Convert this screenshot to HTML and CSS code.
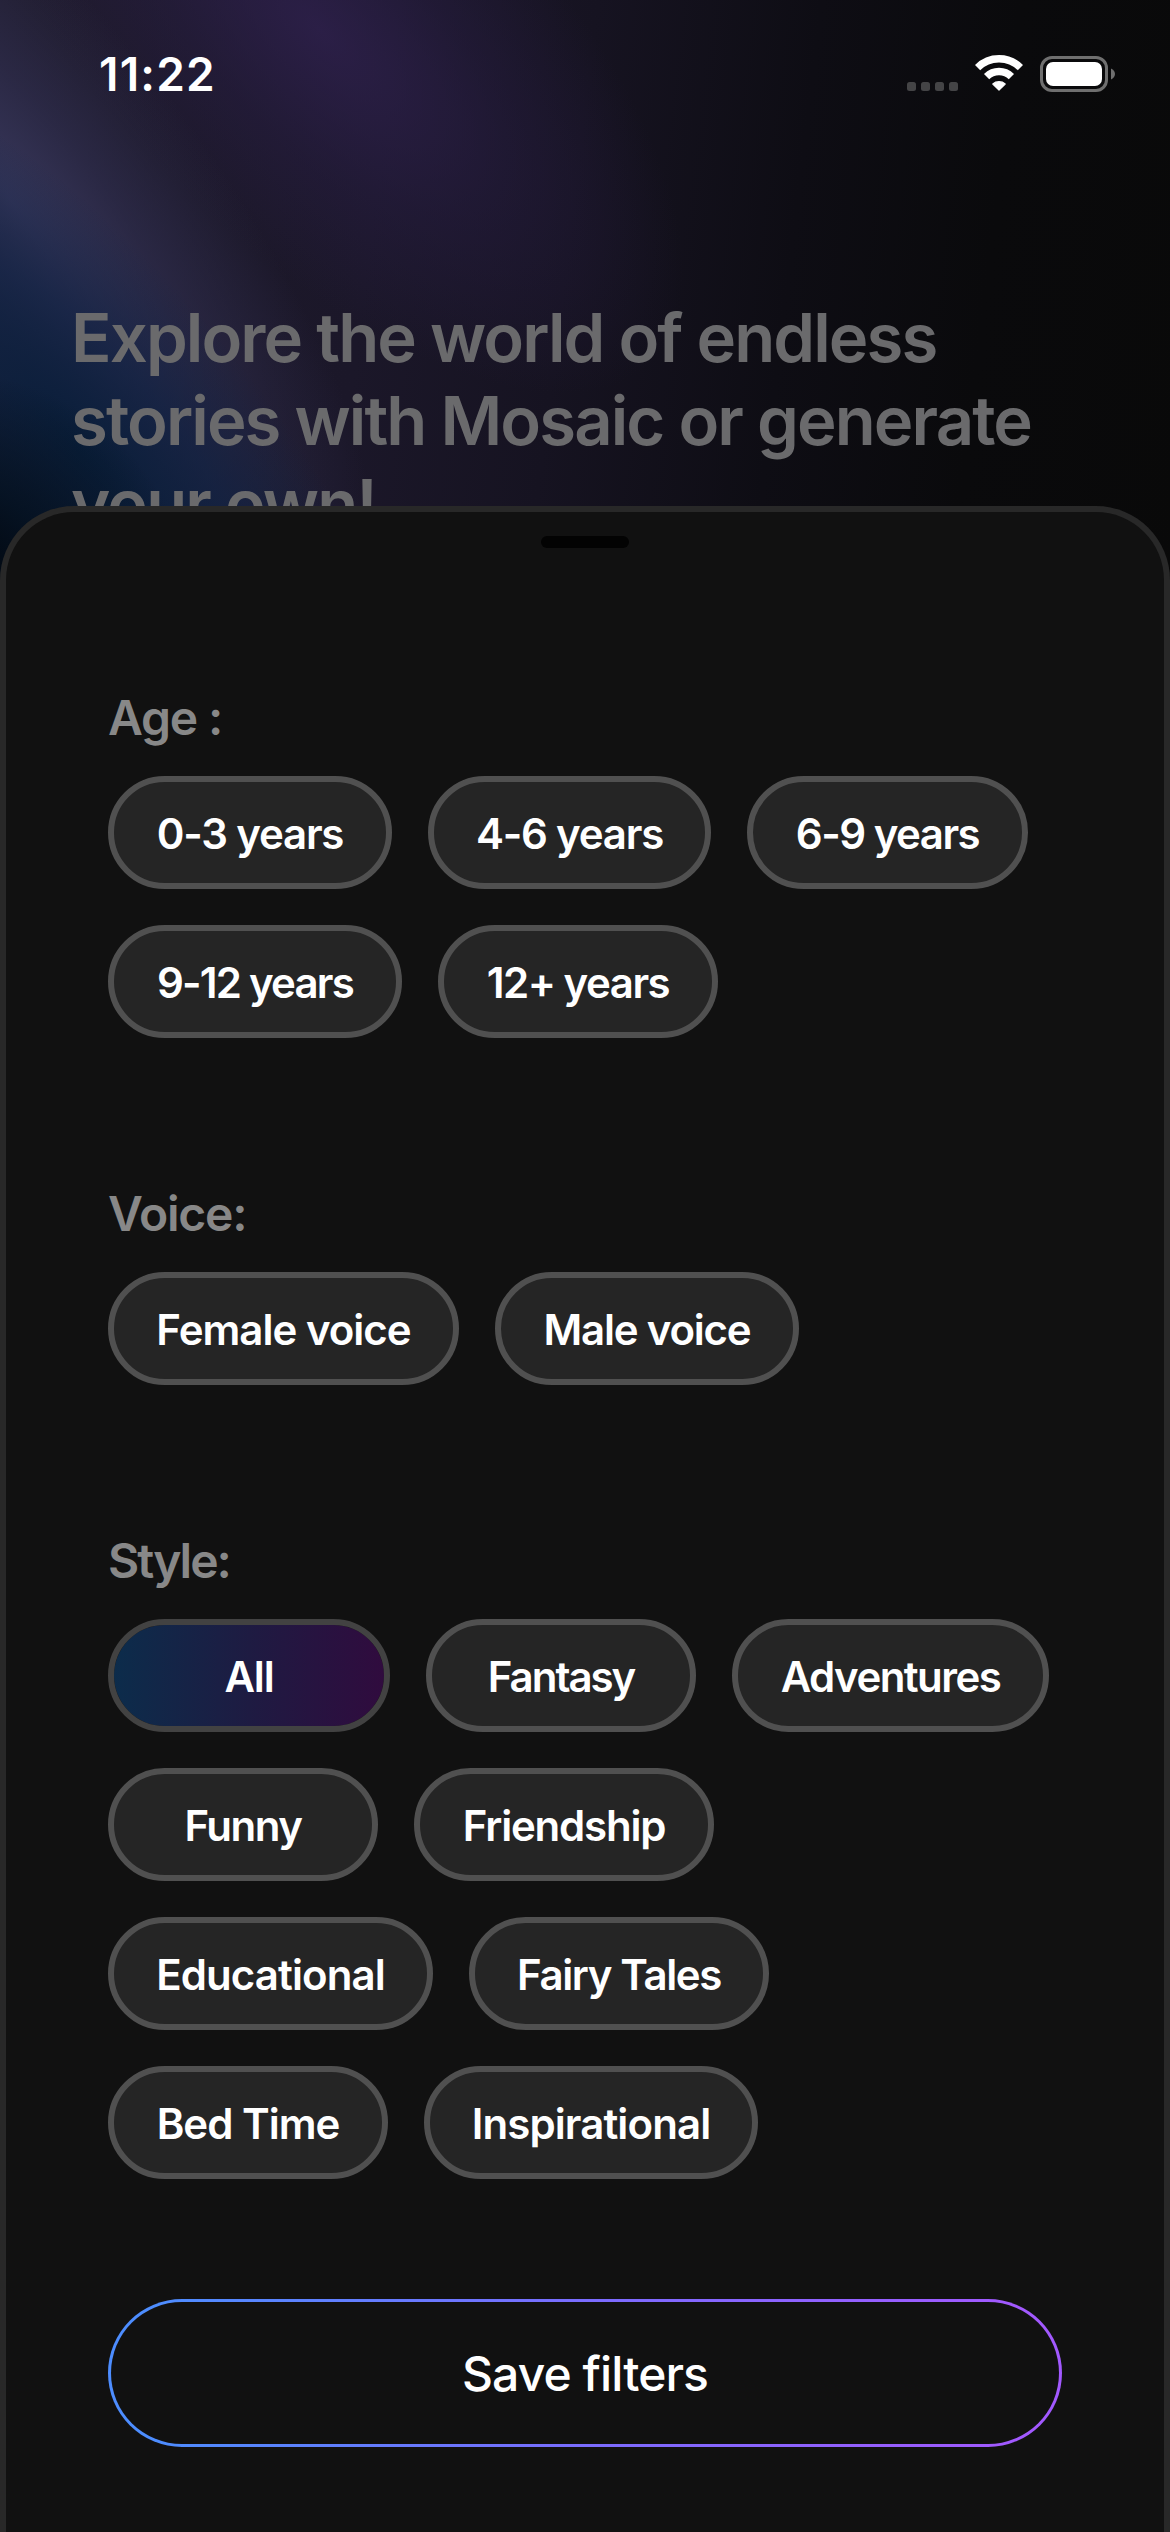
FILE: index.html
```
<!DOCTYPE html>
<html lang="en">
  <head>
    <meta charset="UTF-8" />
    <meta name="viewport" content="width=device-width, initial-scale=1.0" />
    <title>Mosaic - Filters</title>
    <link rel="stylesheet" href="styles.css">
  </head>
  <body>
    <div class="screen">
      <!-- Background glow -->
      <div class="glow">
        <span class="glow-purple"></span>
        <span class="glow-violet"></span>
        <span class="glow-blue"></span>
        <span class="glow-shade"></span>
      </div>
      <!-- Status bar -->
      <header class="status-bar">
        <span class="clock">11:22</span>
        <div class="status-icons">
          <svg width="51" height="36" viewBox="0 0 51 36" fill="#444446">
            <rect x="0" y="26" width="9" height="9" rx="2.5" />
            <rect x="14" y="26" width="9" height="9" rx="2.5" />
            <rect x="28" y="26" width="9" height="9" rx="2.5" />
            <rect x="42" y="26" width="9" height="9" rx="2.5" />
          </svg>
          <svg width="48" height="38" viewBox="0 0 48 38" fill="none" stroke="#fff" stroke-width="7.4">
            <path d="M2.6 12.6A30.3 30.3 0 0 1 45.4 12.6" />
            <path d="M11.6 21.6A17.5 17.5 0 0 1 36.4 21.6" />
            <path d="M24 35.2L17.8 29A9.4 9.4 0 0 1 30.2 29Z" fill="#fff" stroke-width="1.2" stroke-linejoin="round" />
          </svg>
          <svg width="75" height="36" viewBox="0 0 75 36">
            <rect x="1.5" y="1.5" width="65" height="33" rx="10.5" fill="none" stroke="#6f6f6f" stroke-width="3" />
            <rect x="6" y="6" width="56" height="24" rx="7" fill="#fff" />
            <path d="M71 12.5C73.4 13.5 75 15.6 75 18S73.4 22.5 71 23.5Z" fill="#6f6f6f" />
          </svg>
        </div>
      </header>
      <!-- Page title behind the sheet -->
      <section class="hero">
        <h1>Explore the world of endless<br />stories with Mosaic or generate<br />your own!</h1>
      </section>
      <!-- Filter sheet -->
      <main class="sheet">
        <div class="grabber"></div>
        <section class="filter-group">
          <h2>Age :</h2>
          <div class="chips">
            <button class="chip chip-0-3">0-3 years</button>
            <button class="chip chip-4-6">4-6 years</button>
            <button class="chip chip-6-9">6-9 years</button>
            <button class="chip chip-9-12">9-12 years</button>
            <button class="chip chip-12">12+ years</button>
          </div>
        </section>
        <section class="filter-group">
          <h2>Voice:</h2>
          <div class="chips">
            <button class="chip chip-female">Female voice</button>
            <button class="chip chip-male">Male voice</button>
          </div>
        </section>
        <section class="filter-group">
          <h2 class="label-style">Style:</h2>
          <div class="chips">
            <button class="chip chip-all active">All</button>
            <button class="chip chip-fantasy">Fantasy</button>
            <button class="chip chip-adventures">Adventures</button>
            <button class="chip chip-funny">Funny</button>
            <button class="chip chip-friendship">Friendship</button>
            <button class="chip chip-educational">Educational</button>
            <button class="chip chip-fairy">Fairy Tales</button>
            <button class="chip chip-bed">Bed Time</button>
            <button class="chip chip-inspirational">Inspirational</button>
          </div>
        </section>
        <button class="save-button">Save filters</button>
      </main>
    </div>
  </body>
</html>
```
FILE: styles.css
```
* {
  margin: 0;
  padding: 0;
  box-sizing: border-box;
}
:root {
  --sheet: #111111;
  --sheet-border: #282828;
  --chip: #252525;
  --chip-border: #505050;
}
body {
  font-family: "Inter", sans-serif;
  color: #ffffff;
  background-color: #090909;
}
.screen {
  position: relative;
  width: 1170px;
  height: 2532px;
  overflow: hidden;
  display: flex;
  flex-direction: column;
}
/* ================= BACKGROUND GLOW ================= */
.glow {
  position: absolute;
  top: 0;
  left: 0;
  width: 100%;
  height: 620px;
  overflow: hidden;
  background: linear-gradient(97deg, #1f1b2c 0%, #1b1729 32%, #161321 48%, #0e0d14 66%, #0a0a0c 82%, #090909 100%);
}
.glow span {
  position: absolute;
  border-radius: 50%;
}
.glow-purple {
  left: -150px;
  top: -180px;
  width: 940px;
  height: 420px;
  transform: rotate(45deg);
  background: radial-gradient(closest-side, rgba(48, 33, 80, 0.75), rgba(42, 30, 72, 0.4) 50%, rgba(32, 25, 54, 0));
}
.glow-violet {
  left: -530px;
  top: 10px;
  width: 1080px;
  height: 380px;
  transform: rotate(52deg);
  background: radial-gradient(closest-side, rgba(58, 58, 96, 0.9), rgba(50, 49, 84, 0.6) 45%, rgba(38, 36, 62, 0));
}
.glow-blue {
  left: -400px;
  top: 270px;
  width: 960px;
  height: 360px;
  transform: rotate(50deg);
  background: radial-gradient(closest-side, rgba(8, 30, 58, 0.95), rgba(14, 34, 68, 0.65) 50%, rgba(20, 34, 70, 0));
}
.glow-shade {
  left: -310px;
  top: 370px;
  width: 500px;
  height: 460px;
  background: radial-gradient(closest-side, #020a14 25%, rgba(2, 15, 28, 0.8) 50%, rgba(4, 20, 38, 0));
}
/* ================= STATUS BAR ================= */
.status-bar {
  position: relative;
  display: flex;
  justify-content: space-between;
  align-items: center;
  height: 148px;
  padding: 0 55px 0 99px;
}
.clock {
  font-size: 46px;
  font-weight: 600;
  letter-spacing: 1.2px;
}
.status-icons {
  display: flex;
  align-items: center;
  gap: 17px;
}
/* ================= HERO ================= */
.hero {
  position: relative;
  height: 358px;
  padding: 148px 0 0 71px;
  overflow: hidden;
}
.hero h1 {
  font-size: 67px;
  font-weight: 600;
  line-height: 83px;
  letter-spacing: -1.9px;
  color: #6a6a6c;
  white-space: nowrap;
}
/* ================= SHEET ================= */
.sheet {
  position: relative;
  flex: 1;
  display: flex;
  flex-direction: column;
  padding: 24px 102px 0;
  background: var(--sheet);
  border: 6px solid var(--sheet-border);
  border-bottom: none;
  border-radius: 74px 74px 0 0;
}
.grabber {
  align-self: center;
  width: 88px;
  height: 12px;
  margin-bottom: 141px;
  border-radius: 6px;
  background: #030303;
}
.filter-group {
  margin-bottom: 147px;
}
.filter-group:last-of-type {
  margin-bottom: 120px;
}
.filter-group h2 {
  margin-bottom: 29px;
  font-size: 48px;
  font-weight: 600;
  line-height: 58px;
  letter-spacing: -1.2px;
  color: #888888;
}
.filter-group .label-style {
  letter-spacing: -2px;
}
.chips {
  display: flex;
  flex-wrap: wrap;
  gap: 36px;
}
.chip {
  height: 113px;
  padding-top: 2px;
  border: 6px solid var(--chip-border);
  border-radius: 57px;
  background: var(--chip);
  color: #ffffff;
  font-family: inherit;
  font-size: 42px;
  font-weight: 600;
  letter-spacing: -1.2px;
  white-space: nowrap;
}
.chip.active {
  border-color: #424242;
  background: linear-gradient(90deg, #0c2c4b, #1e1b42 50%, #300b3e) padding-box;
}
.chip-0-3 {
  width: 284px;
}
.chip-4-6 {
  width: 283px;
}
.chip-6-9 {
  width: 281px;
  letter-spacing: -1.5px;
}
.chip-9-12 {
  width: 294px;
  letter-spacing: -1.8px;
}
.chip-12 {
  width: 280px;
  letter-spacing: -1.5px;
}
.chip-female {
  width: 351px;
  letter-spacing: -1px;
}
.chip-male {
  width: 304px;
}
.chip-all {
  width: 282px;
}
.chip-fantasy {
  width: 270px;
  letter-spacing: -2px;
}
.chip-adventures {
  width: 317px;
  letter-spacing: -1.55px;
}
.chip-funny {
  width: 270px;
  letter-spacing: -1.5px;
}
.chip-friendship {
  width: 300px;
}
.chip-educational {
  width: 325px;
  letter-spacing: -0.9px;
}
.chip-fairy {
  width: 300px;
  letter-spacing: -1.4px;
}
.chip-bed {
  width: 280px;
  letter-spacing: -1px;
}
.chip-inspirational {
  width: 334px;
  letter-spacing: -0.9px;
}
/* Gradient outline */
.save-button {
  height: 148px;
  border: 3px solid transparent;
  border-radius: 74px;
  background:
    linear-gradient(var(--sheet), var(--sheet)) padding-box,
    linear-gradient(90deg, #4d8dff 5%, #7a6cff 50%, #a259ff 95%) border-box;
  color: #ffffff;
  font-family: inherit;
  font-size: 48px;
  font-weight: 500;
  letter-spacing: -0.9px;
}
```
